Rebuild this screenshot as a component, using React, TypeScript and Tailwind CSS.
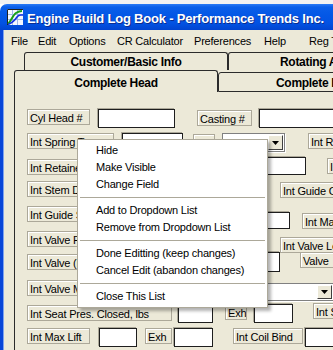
import React from "react";

const lbl =
  "h-[16px] shrink-0 overflow-hidden whitespace-nowrap border border-[#aca899] bg-[#ece9d8] pl-[2px] pt-[1px] leading-[14px] shadow-[inset_1px_1px_0_#fff]";
const box = "shrink-0 border border-[#1e1e1e] bg-white shadow-[-1px_-1px_0_#aca899]";

function Lbl({ text, className = "" }: { text: string; className?: string }) {
  return <div className={`${lbl} ${className}`}>{text}</div>;
}

function Box({ className = "" }: { className?: string }) {
  return <div className={`${box} ${className}`} />;
}

function Combo({ className = "" }: { className?: string }) {
  return (
    <div className={`flex shrink-0 justify-end border border-[#808080] bg-white p-[1px] shadow-[1px_1px_0_#fff] ${className}`}>
      <div className="flex w-[15px] items-center justify-center border border-t-white border-l-white border-r-[#404040] border-b-[#404040] bg-[#ece9d8]">
        <svg width="7" height="4" viewBox="0 0 7 4">
          <path d="M0 0h7L3.5 4z" fill="#000" />
        </svg>
      </div>
    </div>
  );
}

function AppIcon() {
  return (
    <svg width="16" height="16" viewBox="0 0 16 16" className="shrink-0">
      <rect x="0" y="0" width="16" height="16" fill="#f4f8ff" />
      <path d="M0.5 16V0.5H16" stroke="#202020" fill="none" />
      <path d="M1 5.5h15M1 10.5h15M5.5 1v15M10.5 1v15" stroke="#9fb8e8" strokeWidth="1" />
      <path d="M1 15 C4 12, 6 6, 9 4 S13 2, 15 2" stroke="#18a018" strokeWidth="2" fill="none" />
      <path d="M1 15.5 C5 14, 8 11, 10 8 S13 6, 16 6" stroke="#1030e0" strokeWidth="1.5" fill="none" />
    </svg>
  );
}

const menu: (string | null)[] = [
  "Hide",
  "Make Visible",
  "Change Field",
  null,
  "Add to Dropdown List",
  "Remove from Dropdown List",
  null,
  "Done Editting (keep changes)",
  "Cancel Edit (abandon changes)",
  null,
  "Close This List",
];

export default function App() {
  return (
    <div className="relative h-[350px] w-[333px] overflow-hidden bg-white font-['Liberation_Sans',Arial,sans-serif] text-[11px] tracking-[-0.2px] text-black">
      <div className="h-[4px] bg-[#f2f2f2]" />

      {/* title bar */}
      <div className="flex h-[26px] items-start gap-[4px] rounded-tl-[7px] bg-[linear-gradient(180deg,#2a7af5_0%,#0a5ee9_12%,#0458e6_40%,#0252e2_75%,#0144d0_100%)] pl-[7px] pt-[5px]">
        <AppIcon />
        <div className="pt-[2px] text-[13px] font-bold leading-[16px] whitespace-nowrap text-white [text-shadow:1px_1px_0_#0c2d8f]">
          Engine Build Log Book - Performance Trends Inc.
        </div>
      </div>

      <div className="flex">
        <div className="w-[4px] shrink-0 border-r border-[#7fa3ee] bg-[#0846d8]" />
        <div className="h-[320px] flex-1 bg-[#ece9d8]">
          {/* menu bar */}
          <div className="flex h-[20px] pl-[7px] pt-[2px] leading-[19px] whitespace-nowrap">
            <div className="w-[27px]">File</div>
            <div className="w-[31px]">Edit</div>
            <div className="w-[48px]">Options</div>
            <div className="w-[77px]">CR Calculator</div>
            <div className="w-[70px]">Preferences</div>
            <div className="w-[45px]">Help</div>
            <div>Reg Tools</div>
          </div>

          <div className="pl-[10px] text-[12px] font-bold tracking-[-0.3px]">
            {/* back tab row */}
            <div className="ml-[10px] mt-[2px] flex h-[18px] whitespace-nowrap">
              <div className="w-[204px] shrink-0 rounded-t-[3px] border-x border-t border-[#2b2b2b] pt-[2px] text-center leading-[14px]">
                Customer/Basic Info
              </div>
              <div className="w-[204px] shrink-0 rounded-t-[3px] border-x border-t border-[#2b2b2b] pl-[51px] pt-[2px] leading-[14px]">
                Rotating Assembly
              </div>
            </div>
            {/* front tab row */}
            <div className="flex h-[22px] items-end whitespace-nowrap">
              <div className="h-[22px] w-[204px] shrink-0 rounded-t-[3px] border-x border-t border-[#2b2b2b] pt-[5px] text-center leading-[14px]">
                Complete Head
              </div>
              <div className="h-[20px] w-[204px] shrink-0 rounded-t-[3px] border border-[#2b2b2b] pl-[57px] pt-[3px] leading-[14px]">
                Complete Head
              </div>
            </div>

            {/* panel */}
            <div className="h-[260px] border-l border-[#2b2b2b] pl-[12px] pt-[17px] text-[11px] font-normal tracking-[-0.2px]">
              <div className="flex h-[24px] items-start">
                <Lbl text="Cyl Head #" className="w-[63px]" />
                <Box className="ml-[8px] h-[19px] w-[77px]" />
                <Lbl text="Casting #" className="ml-[22px] mt-[1px] w-[55px]" />
                <Box className="ml-[7px] h-[19px] w-[120px]" />
              </div>
              <div className="flex h-[24px] items-start">
                <Lbl text="Int Spring Type" className="w-[87px]" />
                <Box className="ml-[8px] h-[19px] w-[61px]" />
                <Lbl text="Exh" className="ml-[10px] mt-[1px] w-[22px]" />
                <Combo className="ml-[7px] h-[19px] w-[63px]" />
                <Lbl text="Int Rocker Ratio" className="ml-[23px] w-[80px]" />
              </div>
              <div className="flex h-[24px] items-start">
                <Lbl text="Int Retainer Type" className="mt-[2px] w-[160px]" />
                <Box className="ml-[43px] h-[18px] w-[76px]" />
                <Lbl text="Int Lash" className="ml-[21px] mt-[1px] w-[60px]" />
              </div>
              <div className="flex h-[25px] items-start">
                <Lbl text="Int Stem Dia" className="w-[200px]" />
                <Lbl text="Int Guide OD" className="ml-[53px] mt-[1px] w-[80px]" />
              </div>
              <div className="flex h-[25px] items-start">
                <Lbl text="Int Guide Spec" className="w-[160px]" />
                <Box className="ml-[43px] mt-[6px] h-[17px] w-[60px]" />
                <Lbl text="Int Max Lift" className="ml-[12px] mt-[7px] w-[70px]" />
              </div>
              <div className="flex h-[21px] items-start">
                <Lbl text="Int Valve Face Angle" className="w-[200px]" />
                <Lbl text="Int Valve Length" className="ml-[53px] mt-[6px] w-[80px]" />
              </div>
              <div className="flex h-[28px] items-start">
                <Lbl text="Int Valve (Head) Dia" className="mt-[2px] w-[160px]" />
                <Box className="ml-[53px] h-[20px] w-[40px]" />
                <Lbl text="Valve" className="ml-[20px] w-[60px]" />
              </div>
              <div className="flex h-[23px] items-start">
                <Lbl text="Int Valve Material" className="w-[140px]" />
                <Combo className="ml-[13px] mt-[3px] h-[18px] w-[154px]" />
              </div>
              <div className="flex h-[24px] items-start">
                <Lbl text="Int Seat Pres. Closed, lbs" className="mt-[2px] w-[145px]" />
                <Box className="ml-[6px] mt-[2px] h-[18px] w-[35px]" />
                <Lbl text="Exh" className="ml-[12px] mt-[1px] w-[22px]" />
                <Box className="ml-[7px] mt-[1px] h-[19px] w-[39px]" />
                <Lbl text="Int Seat Pres. Open" className="ml-[20px] w-[60px]" />
              </div>
              <div className="flex h-[24px] items-start">
                <Lbl text="Int Max Lift" className="mt-[1px] w-[63px]" />
                <Box className="ml-[9px] mt-[1px] h-[19px] w-[38px]" />
                <Lbl text="Exh" className="ml-[8px] mt-[1px] w-[27px]" />
                <Box className="ml-[2px] mt-[1px] h-[19px] w-[39px]" />
                <Lbl text="Int Coil Bind" className="ml-[20px] mt-[1px] w-[70px]" />
                <Box className="ml-[2px] mt-[1px] h-[19px] w-[60px]" />
              </div>
            </div>
          </div>
        </div>
      </div>

      {/* context menu */}
      <div className="absolute left-[77px] top-[139px] w-[191px] border border-[#aca899] bg-white py-[2px] shadow-[3px_3px_3px_rgba(0,0,0,0.3)]">
        {menu.map((m, i) =>
          m === null ? (
            <div key={i} className="flex h-[9px] items-center px-[2px]">
              <div className="h-px w-full bg-[#aca899]" />
            </div>
          ) : (
            <div key={i} className="h-[17px] whitespace-nowrap pl-[18px] leading-[17px]">
              {m}
            </div>
          )
        )}
      </div>
    </div>
  );
}
